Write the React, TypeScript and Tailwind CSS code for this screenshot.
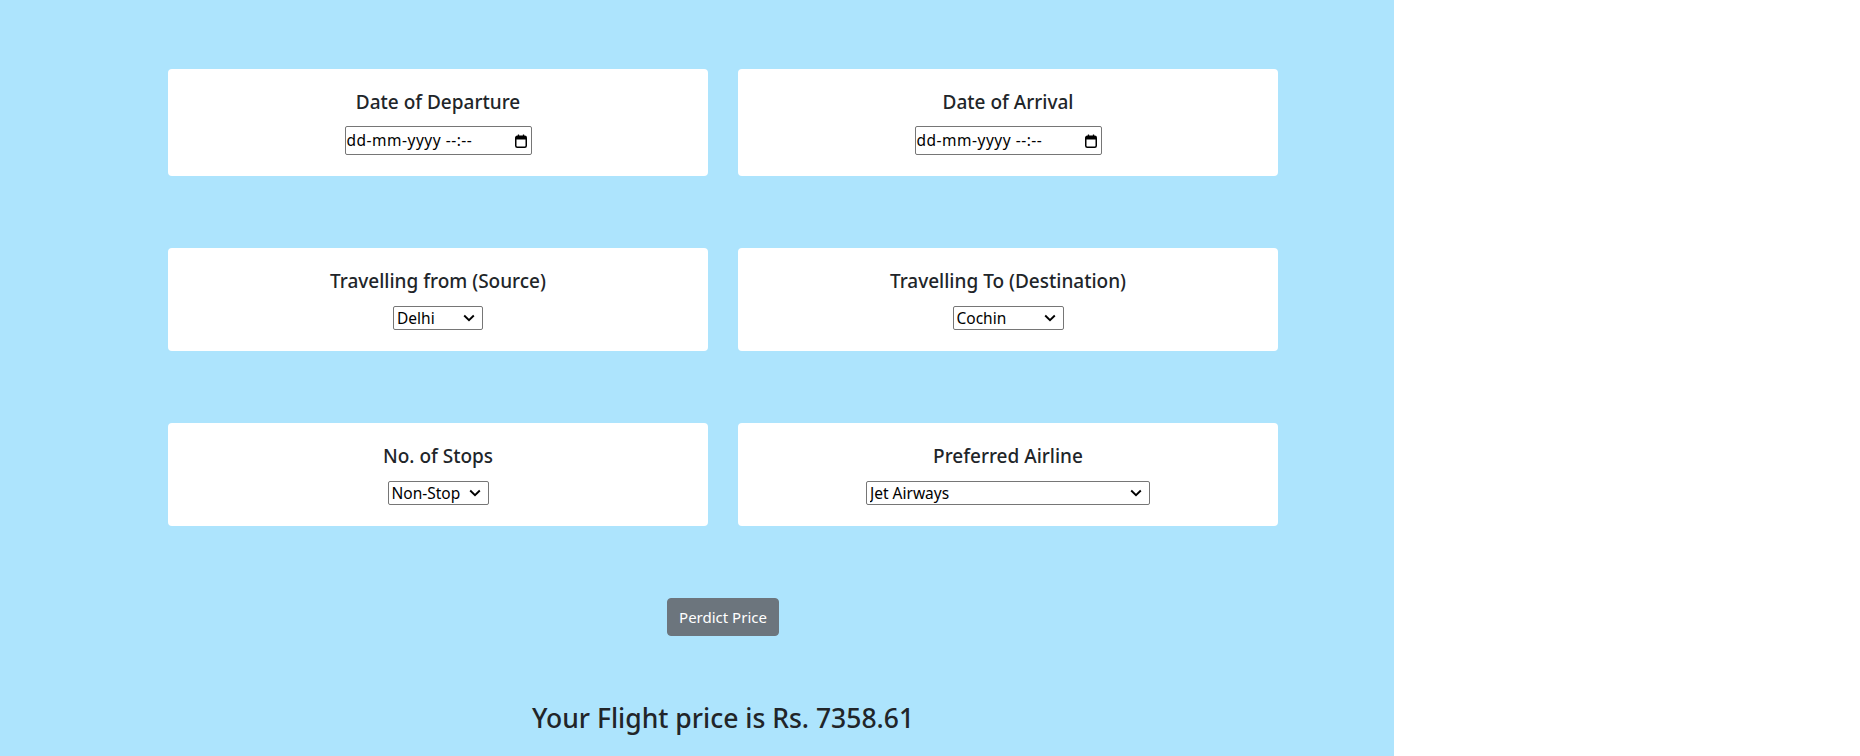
import type { ReactNode } from "react";

const sources = ["Delhi", "Kolkata", "Mumbai", "Chennai", "Banglore"];
const destinations = ["Cochin", "Delhi", "New Delhi", "Hyderabad", "Kolkata", "Banglore"];
const stops = ["Non-Stop", "1", "2", "3", "4"];
const airlines = [
  "Jet Airways",
  "IndiGo",
  "Air India",
  "Multiple carriers",
  "SpiceJet",
  "Vistara",
  "Air Asia",
  "GoAir",
  "Multiple carriers Premium economy",
  "Jet Airways Business",
  "Vistara Premium economy",
  "Trujet",
];

function Card({ title, children }: { title: string; children: ReactNode }) {
  return (
    <div className="flex flex-col items-center rounded-[4px] bg-white px-5 py-[21px] text-center">
      <h5 className="h-6 text-[19px] leading-6 font-medium text-[#212529]">{title}</h5>
      {children}
    </div>
  );
}

function CalendarIcon() {
  return (
    <svg width="12" height="14" viewBox="0 0 12 14" className="shrink-0">
      <path d="M3.5 0.5v2.5M8.5 0.5v2.5" stroke="#000" strokeWidth="1.3" />
      <rect x="0.75" y="2.25" width="10.5" height="11" rx="1.5" fill="none" stroke="#000" strokeWidth="1.5" />
      <rect x="1" y="2.5" width="10" height="3" fill="#000" />
    </svg>
  );
}

function DateField() {
  return (
    <label className="mt-3 flex h-[29px] w-[187px] items-center justify-between rounded-[2px] border border-[#767676] bg-white pl-[1px] pr-[4px] text-[15.5px] tracking-[0.5px] text-black">
      <span>dd-mm-yyyy --:--</span>
      <CalendarIcon />
    </label>
  );
}

function Select({ width, options }: { width: string; options: string[] }) {
  return (
    <div className={`relative mt-[13px] h-6 ${width}`}>
      <select
        defaultValue={options[0]}
        className="h-6 w-full appearance-none rounded-[2px] border border-[#767676] bg-white pl-[3px] pr-6 text-[15.5px] leading-[22px] text-black outline-none"
      >
        {options.map((o) => (
          <option key={o}>{o}</option>
        ))}
      </select>
      <svg
        className="pointer-events-none absolute right-[8px] top-1/2 -translate-y-1/2"
        width="12"
        height="8"
        viewBox="0 0 12 8"
      >
        <path d="M1.2 1.5l4.8 4.6 4.8-4.6" fill="none" stroke="#000" strokeWidth="1.9" />
      </svg>
    </div>
  );
}

export default function App() {
  return (
    <div className="flex min-h-screen w-full bg-white font-['Noto_Sans',sans-serif]">
      <div className="min-h-screen w-[1394px] shrink-0 bg-[#ade4fd] pt-[69px]">
        <form className="ml-[153px] w-[1140px] px-[15px]">
          <div className="flex flex-col gap-[72px]">
            <div className="grid grid-cols-2 gap-[30px]">
              <Card title="Date of Departure">
                <DateField />
              </Card>
              <Card title="Date of Arrival">
                <DateField />
              </Card>
            </div>
            <div className="grid grid-cols-2 gap-[30px]">
              <Card title="Travelling from (Source)">
                <Select width="w-[90px]" options={sources} />
              </Card>
              <Card title="Travelling To (Destination)">
                <Select width="w-[111px]" options={destinations} />
              </Card>
            </div>
            <div className="grid grid-cols-2 gap-[30px]">
              <Card title="No. of Stops">
                <Select width="w-[101px]" options={stops} />
              </Card>
              <Card title="Preferred Airline">
                <Select width="w-[284px]" options={airlines} />
              </Card>
            </div>
          </div>

          <div className="mt-[72px] flex justify-center">
            <button
              type="button"
              className="h-[38px] w-[112px] rounded-[4px] border border-[#6c757d] bg-[#6c757d] text-[15px] text-white"
            >
              Perdict Price
            </button>
          </div>

          <h3 className="mt-[65px] text-center text-[26.5px] leading-[34px] font-medium text-[#212529]">
            Your Flight price is Rs. 7358.61
          </h3>
        </form>
      </div>
    </div>
  );
}
